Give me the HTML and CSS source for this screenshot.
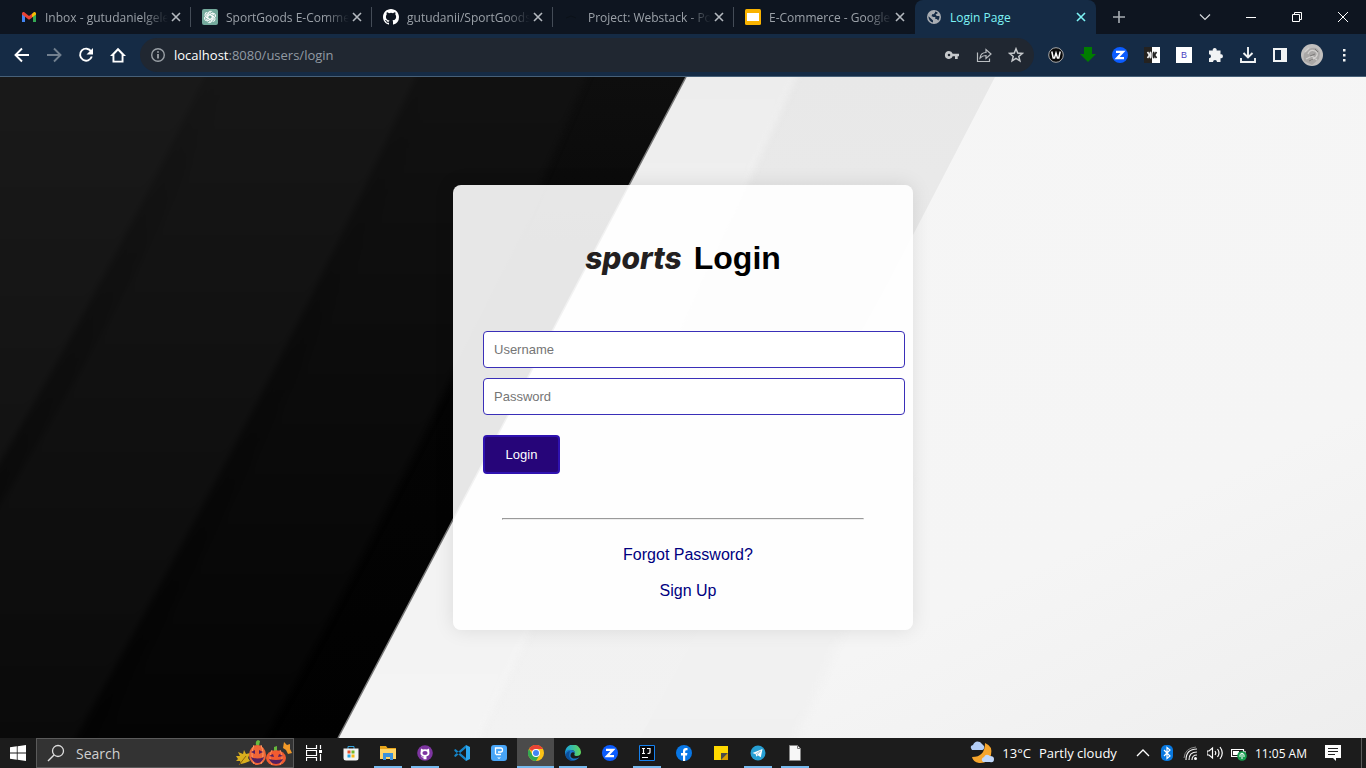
FILE: index.html
```html
<!DOCTYPE html>
<html lang="en">
<head>
<meta charset="utf-8">
<meta name="viewport" content="width=device-width, initial-scale=1">
<title>Login Page</title>
<link rel="stylesheet" href="styles.css">
</head>
<body>
<svg class="defs" aria-hidden="true">
  <symbol id="x" viewBox="0 0 16 16"><path d="M4 4l8 8M12 4l-8 8" fill="none" stroke="currentColor" stroke-width="1.6"/></symbol>
  <symbol id="zoomapp" viewBox="0 0 16 16"><circle cx="8" cy="8" r="8" fill="#0b5cff"/><path d="M4 4.800h7L5 11.200h7" fill="none" stroke="#fff" stroke-width="2.200"/></symbol>
</svg>

<header class="tabstrip">
  <nav class="tabs" aria-label="Tabs">
    <div class="tab">
      <svg class="fav" viewBox="0 0 16 16"><path d="M1 4v9h3V6z" fill="#4285f4"/><path d="M15 4v9h-3V6z" fill="#34a853"/><path d="M1 4.500Q1 2.500 3 3l5 4 3-2.300v4L8 10.800 1 5.500z" fill="#ea4335"/><path d="M11 4.700L13 3q2-.4 2 1.500v1L11 8.500z" fill="#fbbc04"/></svg>
      <a class="tab-title" href="#">Inbox - gutudanielgele</a><button class="close" aria-label="Close tab"><svg><use href="#x"/></svg></button>
    </div>
    <div class="tab">
      <svg class="fav" viewBox="0 0 16 16"><rect width="16" height="16" rx="2" fill="#74aa9c"/><g fill="none" stroke="#fff" stroke-width=".9"><path id="pt" d="M6 8.800V4.600a2.500 2.500 0 0 1 4.600-1.200M6 6.500l3.500-2 3 1.700"/><use href="#pt" transform="rotate(60 8 8)"/><use href="#pt" transform="rotate(120 8 8)"/><use href="#pt" transform="rotate(180 8 8)"/><use href="#pt" transform="rotate(240 8 8)"/><use href="#pt" transform="rotate(300 8 8)"/></g></svg>
      <a class="tab-title" href="#">SportGoods E-Comme</a><button class="close" aria-label="Close tab"><svg><use href="#x"/></svg></button>
    </div>
    <div class="tab">
      <svg class="fav" viewBox="0 0 16 16"><path fill="#fff" d="M8 0C3.580 0 0 3.580 0 8c0 3.540 2.290 6.530 5.470 7.590.4.070.55-.17.55-.38 0-.19-.01-.82-.01-1.490-2.010.37-2.530-.49-2.690-.94-.09-.23-.48-.94-.82-1.130-.28-.15-.68-.52-.01-.53.63-.01 1.080.58 1.230.82.72 1.210 1.870.87 2.330.66.070-.52.28-.87.51-1.070-1.780-.2-3.640-.89-3.640-3.950 0-.87.31-1.590.82-2.150-.08-.2-.36-1.020.08-2.120 0 0 .67-.21 2.200.82a7.600 7.600 0 0 1 4 0c1.530-1.040 2.200-.82 2.200-.82.44 1.100.16 1.920.08 2.120.51.56.82 1.270.82 2.150 0 3.070-1.870 3.750-3.650 3.950.29.25.54.73.54 1.480 0 1.070-.01 1.930-.01 2.200 0 .21.15.46.55.38A8 8 0 0 0 16 8c0-4.420-3.580-8-8-8z"/></svg>
      <a class="tab-title" href="#">gutudanii/SportGoods</a><button class="close" aria-label="Close tab"><svg><use href="#x"/></svg></button>
    </div>
    <div class="tab">
      <svg class="fav" viewBox="0 0 16 16"><path d="M2 9l5-2 5 2" stroke="#0b1118" fill="none"/></svg>
      <a class="tab-title" href="#">Project: Webstack - Po</a><button class="close" aria-label="Close tab"><svg><use href="#x"/></svg></button>
    </div>
    <div class="tab last">
      <svg class="fav" viewBox="0 0 16 16"><rect width="16" height="16" rx="1.500" fill="#f9b300"/><rect x="2" y="4" width="12" height="8" fill="#fff"/></svg>
      <a class="tab-title" href="#">E-Commerce - Google</a><button class="close" aria-label="Close tab"><svg><use href="#x"/></svg></button>
    </div>
    <div class="tab active">
      <svg class="fav" viewBox="0 0 16 16"><circle cx="8" cy="8" r="7" fill="#a9adb3"/><path d="M9 2.500v1.300L7.600 5.200H6v1.600H4.600L7.500 8h1.800v2h1.500l1.500 1.500A5.500 5.500 0 0 0 13.400 7h-2.600L9.500 5.500 12 4A6 6 0 0 0 9 2.500zM2.500 7.300A5.600 5.600 0 0 0 7 13.400v-1.900L5.500 10z" fill="#152b45"/></svg>
      <a class="tab-title" href="#">Login Page</a><button class="close" aria-label="Close tab"><svg><use href="#x"/></svg></button>
    </div>
  </nav>
  <button class="newtab" aria-label="New tab"><svg viewBox="0 0 16 16"><path d="M8 2v12M2 8h12" stroke="#a8adb3" stroke-width="1.600"/></svg></button>
  <div class="wincontrols">
    <button aria-label="Search tabs"><svg viewBox="0 0 16 16"><path d="M3 5.500l5 5 5-5" fill="none" stroke="#d5d8dc" stroke-width="1.200"/></svg></button>
    <button aria-label="Minimize"><svg viewBox="0 0 16 16"><path d="M3 8.500h10" stroke="#fff"/></svg></button>
    <button aria-label="Restore"><svg viewBox="0 0 16 16"><path d="M3.500 5.500h7v7h-7zM5.500 5.500v-2h7v7h-2" fill="none" stroke="#fff"/></svg></button>
    <button aria-label="Close"><svg viewBox="0 0 16 16"><path d="M3 3l10 10M13 3L3 13" stroke="#fff"/></svg></button>
  </div>
</header>

<div class="toolbar">
  <button aria-label="Back"><svg viewBox="0 0 16 16"><path d="M15 8H2M8 1.500L1.500 8 8 14.500" fill="none" stroke="#fff" stroke-width="1.900"/></svg></button>
  <button aria-label="Forward"><svg viewBox="0 0 16 16"><path d="M1 8h13M8 1.500L14.500 8 8 14.500" fill="none" stroke="#72808f" stroke-width="1.900"/></svg></button>
  <button aria-label="Reload"><svg viewBox="0 0 16 16"><path d="M13.200 4.500A6 6 0 1 0 13.800 9.500" fill="none" stroke="#fff" stroke-width="1.900"/><path d="M15 1v6.500H8.500z" fill="#fff"/></svg></button>
  <button aria-label="Home"><svg viewBox="0 0 16 16"><path d="M0 9L8 .8 16 9h-2.500v6.500h-11V9zM4.400 7.500v6.200h7.200V7.500L8 3.700z" fill="#fff" fill-rule="evenodd"/></svg></button>
  <div class="omnibox">
    <button class="info" aria-label="Site information"><svg viewBox="0 0 16 16"><circle cx="8" cy="8" r="6.300" fill="none" stroke="#9aa0a6" stroke-width="1.400"/><path d="M8 7v4.500M8 4.300v1.500" stroke="#b5babf" stroke-width="1.500"/></svg></button>
    <a class="url" href="#"><span class="host">localhost</span>:8080/users/login</a>
    <button aria-label="Passwords"><svg viewBox="0 0 16 16"><path d="M5 4a4 4 0 1 0 3.700 5.300H11V12h2.700V9.300H15V6.700H8.700A4 4 0 0 0 5 4zm0 2.700a1.300 1.300 0 1 1 0 2.600 1.300 1.300 0 0 1 0-2.600z" fill="#c5c8cb" fill-rule="evenodd"/></svg></button>
    <button aria-label="Share"><svg viewBox="0 0 16 16"><path d="M1.500 5.500v9h12v-3M4 11c.5-4 3-5.500 6-5.500V2.500L15 7l-5 4.500v-3C7 8.500 5.500 9.500 4 11z" fill="none" stroke="#b9bdc1" stroke-width="1.200"/></svg></button>
    <button aria-label="Bookmark"><svg viewBox="0 0 16 16"><path d="M8 1.800l1.700 4.300 4.600.3-3.500 3 1.100 4.500L8 11.400l-3.900 2.500 1.100-4.500-3.500-3 4.600-.3z" fill="none" stroke="#c5c8cb" stroke-width="1.500"/></svg></button>
  </div>
  <button aria-label="W extension"><svg viewBox="0 0 16 16"><circle cx="8" cy="8" r="7.300" fill="#090909" stroke="#aaa"/><path d="M3.800 4.500l1.400 6.500h1.300L8 6l1.500 5h1.300l1.400-6.500" fill="none" stroke="#fff" stroke-width="1.500"/></svg></button>
  <button aria-label="Download extension"><svg viewBox="0 0 16 16"><path d="M4 0h8v7h4l-8 8-8-8h4z" fill="#007c00"/></svg></button>
  <button aria-label="Zoom"><svg><use href="#zoomapp"/></svg></button>
  <button aria-label="Viewer extension"><svg viewBox="0 0 16 16"><path d="M0 0h16v16H0z" fill="#242220"/><path d="M8 0h8v16H8z" fill="#fff"/><path d="M3.500 5l2 3-2 3" stroke="#eee" stroke-width="1.600" fill="none"/><ellipse cx="6.500" cy="8" rx="1.200" ry="3.500" fill="#eee"/><path d="M12.500 5l-2 3 2 3" stroke="#222" stroke-width="1.600" fill="none"/><ellipse cx="9.700" cy="8" rx="1.200" ry="3.500" fill="#222"/></svg></button>
  <button class="b-ext" aria-label="B extension"><span>B</span></button>
  <button aria-label="Extensions"><svg viewBox="0 0 16 16"><path d="M1 3.500h3.800a2 2 0 1 1 3.800 0H12.500v3.800a2 2 0 1 1 0 3.900V15H9a2 2 0 0 0-4 0H1v-3.700a2 2 0 0 0 0-4z" fill="#f1f3f4"/></svg></button>
  <button aria-label="Downloads"><svg viewBox="0 0 16 16"><path d="M8 0v10M3.500 6L8 10.500 12.500 6M1 11v4h14v-4" fill="none" stroke="#f1f3f4" stroke-width="1.900"/></svg></button>
  <button aria-label="Side panel"><svg viewBox="0 0 16 16"><path d="M1 1h14v14H1zm2 2v10h6V3z" fill="#f1f3f4" fill-rule="evenodd"/></svg></button>
  <button class="avatar" aria-label="Profile"><svg viewBox="0 0 22 22"><circle cx="11" cy="11" r="11" fill="#c1bfbe"/><path d="M3 17Q1 8 8 5q8-4 11 4l-1 6-7 6z" fill="#a9a7a6"/><path d="M7 10q2-5 7-3 4 2 1 6l-5 3M5 15l6-3 5 4M4 8l4-4" fill="none" stroke="#d2d0ce" stroke-width="1.300"/><path d="M9 12l5-2M8 17l4-2M14 5l3 3" stroke="#7b7978" fill="none"/></svg></button>
  <button aria-label="Menu"><svg viewBox="0 0 16 16"><path d="M7 2h2.500v2.500H7zM7 7h2.500v2.500H7zM7 12h2.500v2.500H7z" fill="#f1f3f4"/></svg></button>
</div>

<main class="page">
  <svg class="backdrop" viewBox="0 0 1366 661" preserveAspectRatio="none" aria-hidden="true">
    <defs>
      <linearGradient id="d1" x1="0" y1="0" x2="0" y2="1"><stop offset="0" stop-color="#1a1a1a"/><stop offset="1" stop-color="#121212"/></linearGradient>
      <linearGradient id="d2" x1="0" y1="0" x2="0" y2="1"><stop offset="0" stop-color="#171717"/><stop offset="1" stop-color="#0a0a0a"/></linearGradient>
      <linearGradient id="d3" x1="0" y1="0" x2="0" y2="1"><stop offset="0" stop-color="#121212"/><stop offset="1" stop-color="#040404"/></linearGradient>
      <linearGradient id="d4" x1="0" y1="0" x2="0" y2="1"><stop offset="0" stop-color="#0e0e0e"/><stop offset=".5" stop-color="#040404"/><stop offset="1" stop-color="#010101"/></linearGradient>
      <linearGradient id="l0" x1="0" y1="0" x2="1" y2="1"><stop offset="0" stop-color="#f6f6f6"/><stop offset=".75" stop-color="#f5f5f5"/><stop offset="1" stop-color="#eee"/></linearGradient>
      <linearGradient id="l1" x1="0" y1="0" x2="0" y2="1"><stop offset="0" stop-color="#ededed"/><stop offset=".55" stop-color="#f3f3f3"/><stop offset="1" stop-color="#f4f4f4"/></linearGradient>
      <linearGradient id="l2" x1="0" y1="0" x2="0" y2="1"><stop offset="0" stop-color="#e8e8e8"/><stop offset=".3" stop-color="#eaeaea"/><stop offset=".7" stop-color="#f1f1f1"/><stop offset="1" stop-color="#f2f2f2"/></linearGradient>
      <linearGradient id="l3" x1="0" y1="0" x2="0" y2="1"><stop offset="0" stop-color="#f4f4f4"/><stop offset="1" stop-color="#f0f0f0"/></linearGradient>
      <linearGradient id="sh" x1="0" y1="0" x2="1" y2="0"><stop offset="0" stop-color="#000" stop-opacity=".35"/><stop offset="1" stop-color="#000" stop-opacity="0"/></linearGradient>
      <filter id="soft" x="-5%" y="-5%" width="110%" height="110%" color-interpolation-filters="sRGB"><feGaussianBlur stdDeviation="3"/></filter>
    </defs>
    <path d="M0 0h1366v661H0z" fill="url(#l0)"/>
    <path d="M913 400L784 690H580L740 400z" fill="url(#l3)" filter="url(#soft)"/>
    <path d="M600 0h395L886 210Q760 440 640 661H300z" fill="url(#l2)"/>
    <path d="M600-20h206L740 125Q600 410 470 681H300z" fill="url(#l1)" filter="url(#soft)"/>
    <path d="M0 0h686L338 661H0z" fill="url(#d4)"/>
    <g filter="url(#soft)">
      <path d="M-20-20h614Q460 310 254 681H-20z" fill="url(#d3)"/>
      <path d="M-20-20h444Q300 262 64 681H-20z" fill="url(#d2)"/>
      <path d="M424-20h30Q330 262 90 681H64Q300 262 424-20z" fill="url(#sh)"/>
      <path d="M-20-20h234Q120 180-20 420z" fill="url(#d1)"/>
      <path d="M214-20h28Q145 200-20 460v-40Q120 180 214-20z" fill="url(#sh)"/>
    </g>
    <path d="M686 0L338 661" stroke="#777" stroke-width="1.500"/>
  </svg>
  <form class="card">
    <h1><span class="logo">sports</span><span>Login</span></h1>
    <div class="fields">
      <input type="text" placeholder="Username" aria-label="Username">
      <input type="password" placeholder="Password" aria-label="Password">
    </div>
    <button class="login" type="button">Login</button>
    <hr>
    <nav class="links" aria-label="Account"><a href="#">Forgot Password?</a><a href="#">Sign Up</a></nav>
  </form>
</main>

<footer class="taskbar">
  <button class="start" aria-label="Start"><svg viewBox="0 0 16 16"><path d="M0 2.300L6.800 1.300v6.200H0zM7.600 1.200L16 0v7.500H7.600zM0 8.400h6.800v6.300L0 13.800zM7.600 8.400H16V16l-8.400-1.200z" fill="#fff"/></svg></button>
  <label class="search">
    <svg class="lens" viewBox="0 0 18 18"><circle cx="11" cy="7" r="5.500" fill="none" stroke="#ddd" stroke-width="1.300"/><path d="M7 11L1 17" stroke="#ddd" stroke-width="1.400"/></svg>
    <input type="text" placeholder="Search" aria-label="Search">
    <svg class="pumpkins" viewBox="0 0 56 26"><path d="M0 16l4 0-2-4 5 2 1-4 2 4 4-1-2 5 2 3-5 2-4 1-1-3-4 0 2-2z" fill="#d9ae1d"/><path d="M3 25l7-9" stroke="#8c6410"/><path d="M48 2l3 3 3-1v5l2 4-4 1-2-4-3-2z" fill="#f29a28"/><path d="M20 5q-1-4 2-5l2 1-1 5z" fill="#67b83d"/><ellipse cx="21.500" cy="15" rx="8.500" ry="10" fill="#ee6536"/><path d="M18 5q-4 9 0 19M25 5q4 9 0 19" stroke="#ff9a63" fill="none"/><path d="M15 12l4-2v4zM23 10l4 2-4 2zM15 17q6 3 13 0-2 6-6.500 6T15 17z" fill="#55205e"/><path d="M38 11V7l3-1v5z" fill="#67b83d"/><ellipse cx="40" cy="18" rx="10" ry="7.800" fill="#f15b30"/><path d="M36 10q-4 7 0 15M44 10q4 7 0 15" stroke="#ff8d58" fill="none"/><path d="M33 16l4-2 1 3zM42 17l1-3 4 2zM33 19q7 2 14 0-2 5-7 5t-7-5z" fill="#55205e"/></svg>
  </label>
  <nav class="apps" aria-label="Apps">
    <button aria-label="Task view"><svg viewBox="0 0 16 16"><path d="M.5 0v3.500h10V0M.5 16v-3.500h10V16M.5 5.500h10v5H.5zM14.500 0v4M14.500 9v7" fill="none" stroke="#fff" stroke-width="1.200"/><path d="M13 5h3v3h-3z" fill="#fff"/></svg></button>
    <button aria-label="Store"><svg viewBox="0 0 16 16"><path d="M5 4V1.500h6V4" fill="none" stroke="#36a3dc"/><path d="M.5 3.500h15V13q0 2.500-2.500 2.500H3Q.5 15.500.5 13z" fill="#f4f4f4"/><path d="M4.500 5.500H7.500v3h-3z" fill="#e8502c"/><path d="M8.500 5.500h3v3h-3z" fill="#73b82b"/><path d="M4.500 9.500h3v3h-3z" fill="#20a5e5"/><path d="M8.500 9.500h3v3h-3z" fill="#f7b916"/></svg></button>
    <button class="open" aria-label="File Explorer"><svg viewBox="0 0 16 16"><path d="M0 1h6l1.500 2H16v11H0z" fill="#e7a51b"/><path d="M0 4h16v10H0z" fill="#ffd567"/><path d="M3 8h10v7h-3v-3H6v3H3z" fill="#3b92dc"/></svg></button>
    <button class="open" aria-label="GitHub Desktop"><svg viewBox="0 0 16 16"><circle cx="8" cy="8" r="7.800" fill="#7d35a0"/><path d="M4 3.500l2 1q2-.5 4 0l2-1 .3 3q1 4-2.800 4.800v3h-3v-1.800Q4.800 13 4 11l2.500 1v-.8Q2.500 10.500 3.700 6.500z" fill="#fff"/><ellipse cx="8" cy="8" rx="2.600" ry="2" fill="#7d35a0"/></svg></button>
    <button aria-label="VS Code"><svg viewBox="0 0 16 16"><path d="M0 5l1.500-1L12 13v3L1 6.500zM0 11l1.500 1L12 3V0L1 9.500z" fill="#1684c7"/><path d="M12 0l4 2v12l-4 2z" fill="#2ba7ef"/></svg></button>
    <button aria-label="Database app"><svg viewBox="0 0 16 16"><rect width="16" height="16" rx="3" fill="#48a5f7"/><path d="M4.500 9.500V3h5.300q1.700 0 1.700 2t-1.700 2H7M5 9.500h5" fill="none" stroke="#fff" stroke-width="1.300"/><path d="M6 12.500h4l-2 1.500z" fill="#fff"/></svg></button>
    <button class="open current" aria-label="Chrome"><svg viewBox="0 0 16 16"><circle cx="8" cy="8" r="8" fill="#fbc116"/><path d="M8 8L1 4A8 8 0 0 1 15 4H8z" fill="#ea4335"/><path d="M1 4A8 8 0 0 0 8 16l3.500-6L8 8 4.500 10z" fill="#34a853"/><circle cx="8" cy="8" r="4" fill="#fff"/><circle cx="8" cy="8" r="3" fill="#4285f4"/></svg></button>
    <button class="open" aria-label="Edge"><svg viewBox="0 0 16 16"><defs><linearGradient id="eg" x2="1"><stop stop-color="#18a4df"/><stop offset="1" stop-color="#61d85c"/></linearGradient></defs><path d="M0 8a8 8 0 0 1 16-1q0 4-4.500 4-3-.2-1.800-2.500Q10 5 6 5 2 5 0 9z" fill="url(#eg)"/><path d="M0 8Q2 4 6 5q4 0 4 3.500Q8 6 6 8.500q-2 5 4 5 2 0 4.500-1.500A8 8 0 0 1 0 8z" fill="#1877c9"/><path d="M5 6Q2 15 10 15.800 4 17 1 12q-1-5 4-6z" fill="#0c509b"/></svg></button>
    <button aria-label="Zoom"><svg><use href="#zoomapp"/></svg></button>
    <button class="open" aria-label="IntelliJ"><svg viewBox="0 0 16 16"><path d="M.5.500h15v15H.5z" fill="#070709" stroke="#1681ee"/><path d="M3 3.500h3M4.500 3.500v5M3 8.500h3M8 3.500h3v4q0 1-2.500 1M3 12.500h6" fill="none" stroke="#fff" stroke-width="1.200"/></svg></button>
    <button aria-label="Facebook"><svg viewBox="0 0 16 16"><circle cx="8" cy="8" r="8" fill="#0877e6"/><path d="M7 16v-5.500H5V8h2V6q0-3 3-3h1.500v2.300h-1q-1.300 0-1.300 1.200V8h2.200l-.4 2.500H9.200V16z" fill="#fff"/></svg></button>
    <button aria-label="Sticky Notes"><svg viewBox="0 0 16 16"><path d="M1 1h14v14H1z" fill="#ffd900"/><path d="M15 8v7H8z" fill="#d99e00"/><path d="M8 8h7l-7 7z" fill="#4b4b48"/></svg></button>
    <button class="open" aria-label="Telegram"><svg viewBox="0 0 16 16"><circle cx="8" cy="8" r="7.500" fill="#279fd3"/><path d="M2.500 8L12.500 4l-1.700 8.300-3-2-1.500 1.500-.5-2.500z" fill="#fff"/><path d="M5.500 9l5-3-3.500 4" fill="none" stroke="#a7cde1"/></svg></button>
    <button class="open" aria-label="Document"><svg viewBox="0 0 16 16"><path d="M2.500.500h8l3 3v12h-11z" fill="#f7f7f7" stroke="#888"/><path d="M10.500.500v3h3" fill="none" stroke="#777"/></svg></button>
  </nav>
  <div class="tray">
    <button class="weather"><svg viewBox="0 0 24 24"><path d="M15 2q8 3 6 12-3 9-12 8-6-1-7-6Q15 16 15 2z" fill="#f6a52c"/><path d="M2 9q-3-4 1-5 2-5 7-3 2 2 4 4 1 4-3 4z" fill="#b4cef6"/><path d="M13 21q-3-3 1-5 2-4 6-1 4 0 4 3 0 4-4 3z" fill="#c2d8fa"/></svg><span>13°C</span><span>Partly cloudy</span></button>
    <button class="ti" aria-label="Hidden icons"><svg viewBox="0 0 16 16"><path d="M2 11l6-6 6 6" fill="none" stroke="#fff" stroke-width="1.300"/></svg></button>
    <button class="ti" aria-label="Bluetooth"><svg viewBox="0 0 16 16"><rect x="2" width="12" height="16" rx="5" fill="#0878df"/><path d="M5 5l6 6-3 2.500v-11L11 5l-6 6" fill="none" stroke="#fff" stroke-width="1.200"/></svg></button>
    <button class="ti" aria-label="Network"><svg viewBox="0 0 16 16"><path d="M3 15Q3 4 14 4M6 15q0-8 8-8M9 15q0-5 5-5" fill="none" stroke="#eee" stroke-width="1.200"/><path d="M1 13Q2 3 13 2" stroke="#888" fill="none"/><circle cx="12.500" cy="13.500" r="1.500" fill="#fff"/></svg></button>
    <button class="ti" aria-label="Volume"><svg viewBox="0 0 16 16"><path d="M0 6h2l3.500-3v10L2 10H0zM8 6q1.500 2 0 4M10.500 4q3 4 0 8M13 2q4.500 6 0 12" fill="none" stroke="#fff" stroke-width="1.200"/></svg></button>
    <button class="ti" aria-label="Battery"><svg viewBox="0 0 16 16"><path d="M.5 4.500h12v7H.5zM14 6v4" fill="none" stroke="#fff" stroke-width="1.200"/><path d="M2 6h6v4H2z" fill="#fff"/><circle cx="11" cy="11" r="4.800" fill="#159d4e"/><path d="M11 14V8M9 12V9.500L11 8l2 1.500V12" fill="none" stroke="#fff"/></svg></button>
    <time>11:05 AM</time>
    <button class="notify" aria-label="Notifications"><svg viewBox="0 0 16 16"><path d="M0 0h16v13h-5v3l-3-3H0z" fill="#fff"/><path d="M3 3.500h10M3 6.500h10M3 9.500h7" stroke="#222"/></svg></button>
    <button class="desktop" aria-label="Show desktop"></button>
  </div>
</footer>
</body>
</html>
```
FILE: styles.css
```css
* { box-sizing: border-box; }
html, body { height: 100%; }
body {
  margin: 0;
  display: flex;
  flex-direction: column;
  font-family: "Open Sans", "Noto Sans", sans-serif;
  font-size: 12px;
  overflow: hidden;
}
button {
  border: 0;
  padding: 0;
  background: none;
  font: inherit;
  color: inherit;
  display: flex;
  align-items: center;
  justify-content: center;
}
button svg { width: 16px; height: 16px; flex: none; }
a { text-decoration: none; color: inherit; }
.defs { position: absolute; width: 0; height: 0; }

/* Tab strip */
.tabstrip {
  display: flex;
  align-items: center;
  height: 34px;
  flex: none;
  background: #0e1520;
  color: #9ba1a8;
}
.tabs { display: flex; padding-left: 10px; height: 100%; min-width: 0; }
.tab {
  flex: 0 1 181px;
  width: 181px;
  min-width: 0;
  display: flex;
  align-items: center;
  padding: 0 7px 0 11px;
  background: linear-gradient(#444c57, #444c57) right center / 1px 20px no-repeat;
}
.fav { width: 16px; height: 16px; flex: none; margin-right: 8px; }
.tab-title {
  flex: 1;
  min-width: 0;
  overflow: hidden;
  white-space: nowrap;
  mask-image: linear-gradient(to right, #000 80%, transparent);
}
.close { width: 16px; height: 16px; flex: none; color: #b4b9bf; }
.tab.last { background: #0e1520; border-bottom-right-radius: 8px; }
.tab.active { background: #152b45; color: #7df3f5; border-radius: 8px 8px 0 0; }
.active .tab-title { mask-image: none; }
.active .close { color: #7df3f5; }
.newtab { width: 28px; height: 28px; margin-left: 9px; }
.wincontrols { display: flex; margin-left: auto; height: 28px; }
.wincontrols button { width: 46px; }

/* Toolbar */
.toolbar {
  display: flex;
  align-items: center;
  height: 43px;
  flex: none;
  padding: 0 6px;
  background: #152b45;
  border-bottom: 1px solid #476078;
}
.toolbar button { width: 32px; height: 32px; flex: none; }
.omnibox {
  flex: 1;
  min-width: 0;
  display: flex;
  align-items: center;
  height: 34px;
  margin: 0 6px;
  padding: 0 2px;
  border-radius: 17px;
  background: #202731;
}
.url { flex: 1; min-width: 0; font-size: 13px; color: #929aa3; overflow: hidden; white-space: nowrap; }
.host { color: #fff; }
.b-ext span {
  width: 16px;
  height: 16px;
  background: #fff;
  color: #4a3fc0;
  font: 9px/16px "Liberation Sans", Arial, sans-serif;
}
.toolbar .avatar svg { width: 22px; height: 22px; }

/* Login page */
.page {
  flex: 1;
  min-height: 0;
  position: relative;
  display: flex;
  align-items: center;
  justify-content: center;
  font-family: "Liberation Sans", Arial, sans-serif;
}
.backdrop { position: absolute; inset: 0; width: 100%; height: 100%; }
.card {
  position: relative;
  width: 460px;
  max-width: 100%;
  padding: 30px 30px 21px;
  border-radius: 8px;
  background: rgba(255, 255, 255, 0.9);
  box-shadow: 0 0 20px rgba(0, 0, 0, 0.1);
}
h1 {
  display: flex;
  align-items: center;
  justify-content: center;
  gap: 12px;
  margin: 0 0 30px;
  font-size: 32px;
  line-height: 86px;
  color: #000;
}
.logo { font-family: Inter, sans-serif; font-size: 30px; font-weight: 800; font-style: italic; color: #231f20; }
.fields { display: flex; flex-direction: column; gap: 10px; margin-right: -22px; }
.fields input {
  height: 37px;
  padding: 10px;
  border: 1px solid #3a2fb8;
  border-radius: 4px;
  background: #fff;
  font: 13px "Liberation Sans", Arial, sans-serif;
}
.fields input::placeholder { color: #757575; }
.login {
  width: 77px;
  height: 39px;
  margin-top: 20px;
  border: 2px solid #2f12b0;
  border-radius: 4px;
  background: #260579;
  color: #fff;
  font-size: 13px;
}
hr { width: 362px; max-width: 100%; margin: 44px auto 17px; }
.links { display: flex; flex-direction: column; align-items: center; padding-left: 10px; }
.links a { font-size: 16px; line-height: 36px; color: #000080; }

/* Taskbar */
.taskbar { display: flex; height: 30px; flex: none; background: #1c1c1c; color: #fff; }
.start { width: 36px; }
.search {
  display: flex;
  align-items: center;
  width: 258px;
  padding: 0 1px 0 10px;
  border: 1px solid #5b5b5b;
  background: #333;
}
.lens { width: 18px; height: 18px; flex: none; }
.search input {
  flex: 1;
  min-width: 0;
  padding: 0;
  margin-left: 11px;
  border: 0;
  background: none;
  color: #fff;
  font: 14px "Open Sans", "Noto Sans", sans-serif;
}
.search input::placeholder { color: #d0d0d0; }
.pumpkins { width: 56px; height: 26px; flex: none; }
.apps { display: flex; padding-left: 1px; }
.apps button { width: 37px; }
.open { background: linear-gradient(#76b9ed, #76b9ed) center bottom / 28px 2px no-repeat; }
.current { background-color: #4b4b4b; background-size: 100% 2px; }
.tray { display: flex; align-items: center; margin-left: auto; }
.tray button { height: 30px; }
.weather { gap: 8px; font-size: 13px; margin-right: 14px; white-space: nowrap; }
.weather svg { width: 24px; height: 24px; }
.ti { width: 24px; }
time { margin: 0 16px 0 4px; white-space: nowrap; }
.notify { width: 20px; margin-right: 18px; }
.tray .desktop { width: 5px; border-left: 1px solid #5b5b5b; }
```
